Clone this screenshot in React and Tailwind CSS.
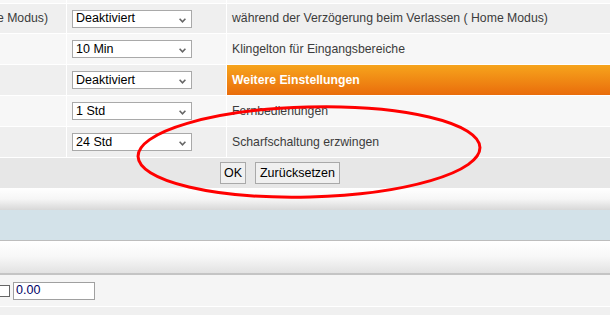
import { useState } from 'react';

const rows = [
  { left: '( Home Modus)', value: 'Deaktiviert', label: 'während der Verzögerung beim Verlassen ( Home Modus)', tone: 'bg-[#efefef]', h: 'h-[29px]' },
  { left: '', value: '10 Min', label: 'Klingelton für Eingangsbereiche', tone: 'bg-[#f7f7f7]', h: 'h-[30px]' },
  { left: '', value: 'Deaktiviert', label: 'Weitere Einstellungen', tone: 'bg-[#efefef]', h: 'h-[30px]', header: true },
  { left: '', value: '1 Std', label: 'Fernbedienungen', tone: 'bg-[#f7f7f7]', h: 'h-[30px]' },
  { left: '', value: '24 Std', label: 'Scharfschaltung erzwingen', tone: 'bg-[#efefef]', h: 'h-[30px]' },
];

function FakeSelect({ value }) {
  return (
    <div className="relative flex h-[18px] w-[120px] items-center border border-[#a9a9a9] bg-white pl-[3px] text-[12.5px] text-black">
      {value}
      <svg className="absolute right-[5px] top-[7px]" width="7" height="5" viewBox="0 0 7 5">
        <path d="M0.6 0.8 L3.5 3.8 L6.4 0.8" fill="none" stroke="#666" strokeWidth="1.6" />
      </svg>
    </div>
  );
}

function Row({ row }) {
  return (
    <div className={`flex gap-px ${row.h}`}>
      <div className={`flex w-[66px] items-center justify-end overflow-hidden whitespace-nowrap pr-[18px] text-[#3c3c3c] ${row.tone}`}>
        {row.left}
      </div>
      <div className={`flex w-[159px] items-center pl-[5px] ${row.tone}`}>
        <FakeSelect value={row.value} />
      </div>
      {row.header ? (
        <div className="flex flex-1 items-center bg-gradient-to-b from-[#f6a41c] to-[#e96c0b] pl-[5px] font-bold text-white">
          {row.label}
        </div>
      ) : (
        <div className={`flex flex-1 items-center whitespace-nowrap pl-[5px] text-[#3c3c3c] ${row.tone}`}>
          {row.label}
        </div>
      )}
    </div>
  );
}

export default function App() {
  const [amount, setAmount] = useState('0.00');

  return (
    <div className="relative h-[315px] w-[610px] overflow-hidden bg-white font-['Liberation_Sans',Arial,sans-serif] text-[12.25px]">
      <div className="flex flex-col gap-px">
        <div className="flex h-[3px] gap-px">
          <div className="w-[66px] bg-[#f7f7f7]" />
          <div className="w-[159px] bg-[#f7f7f7]" />
          <div className="flex-1 bg-[#f7f7f7]" />
        </div>
        {rows.map((r, i) => (
          <Row key={i} row={r} />
        ))}
        <div className="flex h-[30px] items-center gap-[9px] bg-[#e7e7e7] pl-[220px]">
          <button className="h-[22px] w-[26px] border border-[#a9a9a9] bg-[#f0f0f0] text-[12.5px] text-black">OK</button>
          <button className="h-[22px] w-[85px] border border-[#a9a9a9] bg-[#f0f0f0] text-[12.5px] text-black">Zurücksetzen</button>
        </div>
      </div>

      <div className="h-[22px] bg-gradient-to-b from-white via-[#f6f6f6] to-[#d8d8d8]" />
      <div className="h-[31px] border-b border-[#bdbdbd] bg-[#d3e2e9]" />
      <div className="h-[34px] border-b-2 border-[#c4c4c4] bg-gradient-to-b from-white via-[#f7f7f7] to-[#e2e2e2]" />
      <div className="flex h-[32px] items-center gap-[3px] border-b border-white bg-[#f5f5f5]">
        <div className="ml-[-2px] h-[12px] w-[12px] border border-[#666] bg-white" />
        <input
          value={amount}
          onChange={(e) => setAmount(e.target.value)}
          className="h-[18px] w-[82px] border border-[#a0a0a0] bg-white pl-[2px] text-[12.5px] text-[#000066] outline-none"
        />
      </div>
      <div className="h-[10px] bg-[#f0f0f0]" />

      <svg className="pointer-events-none absolute left-0 top-0" width="610" height="315">
        <ellipse cx="309" cy="152" rx="171" ry="45" transform="rotate(-1.5 309 152)" fill="none" stroke="#ff0000" strokeWidth="3" />
      </svg>
    </div>
  );
}
